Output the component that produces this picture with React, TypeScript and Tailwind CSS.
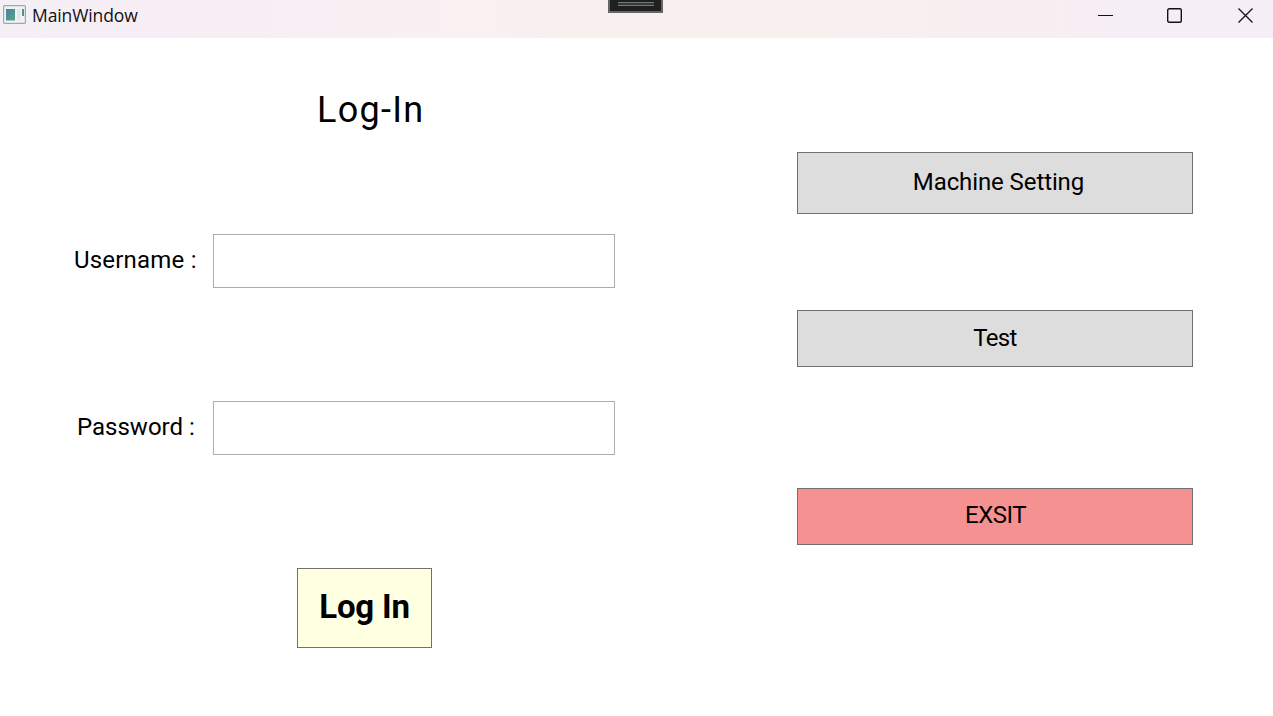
import type { ReactNode } from "react";

function TitleBar() {
  return (
    <header className="relative flex h-[38px] shrink-0 items-start bg-[linear-gradient(90deg,#f4eff6_0%,#f7eef4_16%,#f8f0f2_35%,#f8f0ee_50%,#f8efef_65%,#f8eef2_82%,#f6eef7_90%,#f6eef7_100%)]">
      <svg className="ml-[3px] mt-[5px]" width="23" height="19" viewBox="0 0 23 19">
        <defs>
          <linearGradient id="pane" x1="0" y1="0" x2="1" y2="1">
            <stop offset="0" stopColor="#4a7fa0" />
            <stop offset="1" stopColor="#56a585" />
          </linearGradient>
        </defs>
        <rect x="0.6" y="0.6" width="21.8" height="17.8" rx="1" fill="#f2f3f5" stroke="#a2a5ad" strokeWidth="1.2" />
        <rect x="3" y="4" width="9" height="11.5" fill="url(#pane)" />
        <rect x="14" y="4" width="3.5" height="11.5" fill="#e3e6e8" />
        <rect x="19" y="4" width="2" height="7" fill="#4f9488" />
      </svg>
      <span className="ml-1.5 mt-[3px] whitespace-nowrap font-['Open_Sans',sans-serif] text-[17.5px] leading-6 tracking-[-0.1px] text-[#111]">
        MainWindow
      </span>
      <div className="absolute left-[608px] top-0 flex h-[13px] w-[55px] flex-col items-center border-2 border-t-0 border-[#686565] bg-[#202020] pt-[2px]">
        <div className="h-1 w-9 border-y border-[#777] bg-[#383838]" />
      </div>
      <div className="ml-auto mr-5 mt-2 flex text-[#151017]">
        <svg width="15" height="15" viewBox="0 0 15 15">
          <path d="M0 7.5H15" stroke="currentColor" strokeWidth="1" />
        </svg>
        <svg className="ml-[54px]" width="15" height="15" viewBox="0 0 15 15">
          <rect x="0.7" y="0.7" width="13.6" height="13.6" rx="1.5" fill="none" stroke="currentColor" strokeWidth="1.4" />
        </svg>
        <svg className="ml-[56px]" width="15" height="15" viewBox="0 0 15 15">
          <path d="M0.5 0.5L14.5 14.5M14.5 0.5L0.5 14.5" stroke="currentColor" strokeWidth="1.3" />
        </svg>
      </div>
    </header>
  );
}

function Field({ label, type, labelClass }: { label: string; type: string; labelClass: string }) {
  return (
    <label className="flex h-[54px] items-center">
      <span className={`w-[213px] shrink-0 whitespace-nowrap pb-0.5 text-2xl ${labelClass}`}>{label}</span>
      <input type={type} className="h-[54px] w-[402px] border border-[#abadb3] bg-white px-2 outline-none" />
    </label>
  );
}

function ActionButton({ children, className }: { children: ReactNode; className: string }) {
  return (
    <button className={`flex w-[396px] items-center justify-center whitespace-nowrap border border-[#707070] text-2xl ${className}`}>
      {children}
    </button>
  );
}

export default function App() {
  return (
    <div className="flex h-[716px] w-[1273px] flex-col overflow-hidden bg-white font-['Roboto',sans-serif] text-black">
      <TitleBar />
      <main className="flex flex-1">
        <section className="flex w-[797px] flex-col">
          <h1 className="ml-[317px] mt-[52px] h-10 whitespace-nowrap text-[36px] leading-10 tracking-[1.3px]">Log-In</h1>
          <div className="mt-[104px] flex flex-col gap-[113px]">
            <Field label="Username :" type="text" labelClass="pl-[74px] tracking-[0.2px]" />
            <Field label="Password :" type="password" labelClass="pl-[77px] tracking-[0px]" />
          </div>
          <button className="ml-[297px] mt-[113px] flex h-20 w-[135px] items-center justify-center whitespace-nowrap border border-[#707070] bg-[#ffffe1] pb-[2px] text-[33px] font-bold tracking-[-0.2px]">
            Log In
          </button>
        </section>
        <section className="flex flex-col pt-[114px]">
          <ActionButton className="h-[62px] bg-[#ddd] pb-[2px] pl-[7px] tracking-[-0.1px]">Machine Setting</ActionButton>
          <ActionButton className="mt-24 h-[57px] bg-[#ddd] pb-[1px] tracking-[-0.6px]">Test</ActionButton>
          <ActionButton className="mt-[121px] h-[57px] bg-[#f59191] pb-[3px] pl-[1px] tracking-[-0.5px]">EXSIT</ActionButton>
        </section>
      </main>
    </div>
  );
}
